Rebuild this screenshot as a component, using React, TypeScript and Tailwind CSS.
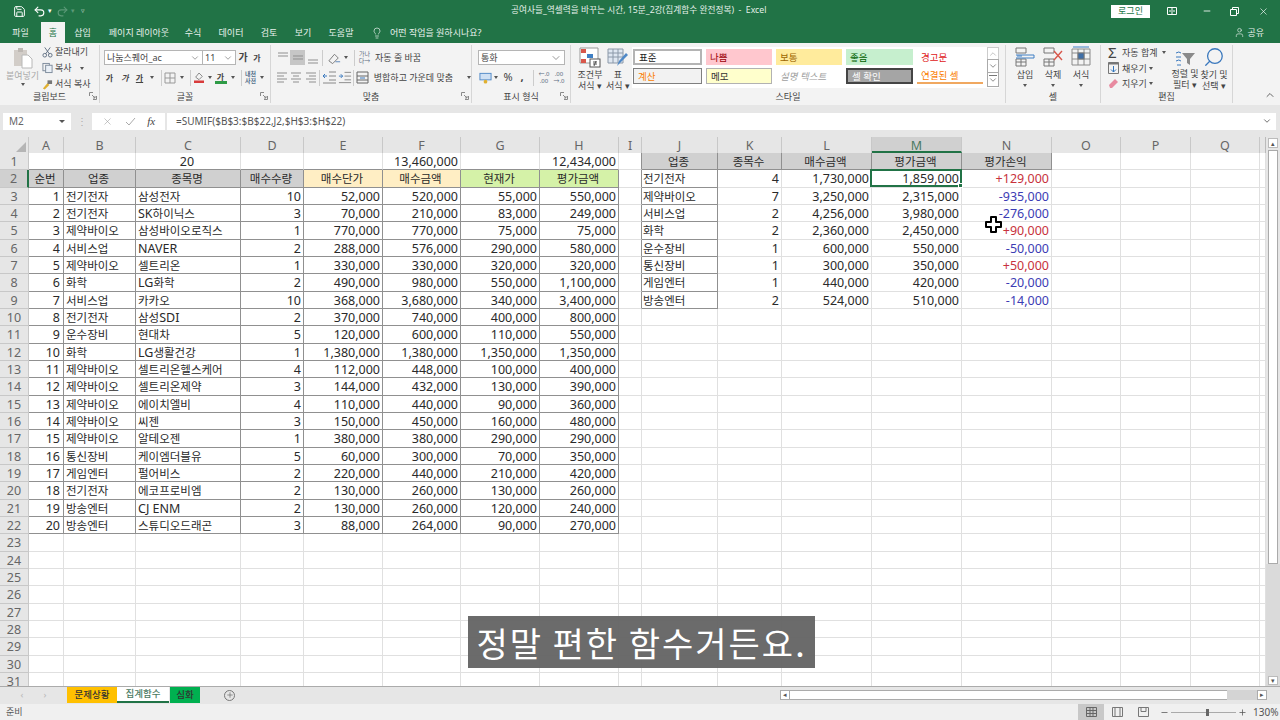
import React from "react";
import { ChevronDown, ChevronUp, Lightbulb, Minus, Plus, Redo2, Save, Search, Undo2, User, X } from "lucide-react";

const cols = [
  ["A", "w-[35px]"], ["B", "w-[72px]"], ["C", "w-[105px]"], ["D", "w-[63px]"], ["E", "w-[79px]"], ["F", "w-[78px]"],
  ["G", "w-[79px]"], ["H", "w-[79px]"], ["I", "w-[23px]"], ["J", "w-[76px]"], ["K", "w-[64px]"], ["L", "w-[90px]"],
  ["M", "w-[90px]"], ["N", "w-[90px]"], ["O", "w-[69px]"], ["P", "w-[70px]"], ["Q", "w-[69px]"], ["R", "w-[6px]"],
] as const;

const stocks: [string, string, string, string, string, string, string, string][] = [
  ["1", "전기전자", "삼성전자", "10", "52,000", "520,000", "55,000", "550,000"],
  ["2", "전기전자", "SK하이닉스", "3", "70,000", "210,000", "83,000", "249,000"],
  ["3", "제약바이오", "삼성바이오로직스", "1", "770,000", "770,000", "75,000", "75,000"],
  ["4", "서비스업", "NAVER", "2", "288,000", "576,000", "290,000", "580,000"],
  ["5", "제약바이오", "셀트리온", "1", "330,000", "330,000", "320,000", "320,000"],
  ["6", "화학", "LG화학", "2", "490,000", "980,000", "550,000", "1,100,000"],
  ["7", "서비스업", "카카오", "10", "368,000", "3,680,000", "340,000", "3,400,000"],
  ["8", "전기전자", "삼성SDI", "2", "370,000", "740,000", "400,000", "800,000"],
  ["9", "운수장비", "현대차", "5", "120,000", "600,000", "110,000", "550,000"],
  ["10", "화학", "LG생활건강", "1", "1,380,000", "1,380,000", "1,350,000", "1,350,000"],
  ["11", "제약바이오", "셀트리온헬스케어", "4", "112,000", "448,000", "100,000", "400,000"],
  ["12", "제약바이오", "셀트리온제약", "3", "144,000", "432,000", "130,000", "390,000"],
  ["13", "제약바이오", "에이치엘비", "4", "110,000", "440,000", "90,000", "360,000"],
  ["14", "제약바이오", "씨젠", "3", "150,000", "450,000", "160,000", "480,000"],
  ["15", "제약바이오", "알테오젠", "1", "380,000", "380,000", "290,000", "290,000"],
  ["16", "통신장비", "케이엠더블유", "5", "60,000", "300,000", "70,000", "350,000"],
  ["17", "게임엔터", "펄어비스", "2", "220,000", "440,000", "210,000", "420,000"],
  ["18", "전기전자", "에코프로비엠", "2", "130,000", "260,000", "130,000", "260,000"],
  ["19", "방송엔터", "CJ ENM", "2", "130,000", "260,000", "120,000", "240,000"],
  ["20", "방송엔터", "스튜디오드래곤", "3", "88,000", "264,000", "90,000", "270,000"],
];

const sectors: [string, string, string, string, string][] = [
  ["전기전자", "4", "1,730,000", "1,859,000", "+129,000"],
  ["제약바이오", "7", "3,250,000", "2,315,000", "-935,000"],
  ["서비스업", "2", "4,256,000", "3,980,000", "-276,000"],
  ["화학", "2", "2,360,000", "2,450,000", "+90,000"],
  ["운수장비", "1", "600,000", "550,000", "-50,000"],
  ["통신장비", "1", "300,000", "350,000", "+50,000"],
  ["게임엔터", "1", "440,000", "420,000", "-20,000"],
  ["방송엔터", "2", "524,000", "510,000", "-14,000"],
];

const tabs = [
  ["파일", "w-[41px]"], ["홈", "w-[24px] bg-[#f3f3f3] text-[#217346]"], ["삽입", "w-[35px]"], ["페이지 레이아웃", "w-[78px]"],
  ["수식", "w-[30px]"], ["데이터", "w-[46px]"], ["검토", "w-[30px]"], ["보기", "w-[38px]"], ["도움말", "w-[38px]"],
];

type CellInfo = { text?: string; cls?: string };

const dark = "border-r-[#909090] border-b-[#909090]";

function getCell(col: string, row: number): CellInfo {
  const si = "ABCDEFGH".indexOf(col);
  const ji = "JKLMN".indexOf(col);
  if (col === "I" && row <= 9) return { cls: "border-r-[#909090]" };
  if (row === 1) {
    if (col === "C") return { text: "20", cls: "justify-center border-b-[#909090]" };
    if (col === "F") return { text: "13,460,000", cls: "justify-end border-b-[#909090]" };
    if (col === "H") return { text: "12,434,000", cls: "justify-end border-b-[#909090]" };
    if (si >= 0) return { cls: "border-b-[#909090]" };
    if (ji >= 0) {
      const labels = ["업종", "종목수", "매수금액", "평가금액", "평가손익"];
      return { text: labels[ji], cls: "justify-center bg-[#d0d0d0] " + dark };
    }
  }
  if (row === 2 && si >= 0) {
    const labels = ["순번", "업종", "종목명", "매수수량", "매수단가", "매수금액", "현재가", "평가금액"];
    const bg = ["bg-[#d0d0d0]", "bg-[#d0d0d0]", "bg-[#d0d0d0]", "bg-[#d0d0d0]", "bg-[#ffeec4]", "bg-[#ffeec4]", "bg-[#d5f2a8]", "bg-[#d5f2a8]"];
    return { text: labels[si], cls: "justify-center " + bg[si] + " " + dark };
  }
  if (row >= 3 && row <= 22 && si >= 0) {
    const left = col === "B" || col === "C";
    const pad = col === "A" ? " !pr-[3px]" : "";
    return { text: stocks[row - 3][si], cls: (left ? "justify-start pl-[2px] " : "justify-end ") + dark + pad };
  }
  if (row >= 2 && row <= 9 && ji >= 0) {
    const v = sectors[row - 2][ji];
    if (col === "J") return { text: v, cls: "justify-start pl-px " + dark };
    if (col === "N") return { text: v, cls: "justify-end " + (v[0] === "+" ? "text-[#c8323c]" : "text-[#3c3cb4]") };
    return { text: v, cls: "justify-end" };
  }
  return {};
}

// korean runs are set a bit smaller than the latin ones, like in the sheet
function CellText({ text }: { text?: string }) {
  if (!text) return null;
  return (
    <span>
      {text.split(/([가-힣]+)/).map((part, i) =>
        i % 2 === 1 ? <span key={i} className="text-[11.5px]">{part}</span> : part
      )}
    </span>
  );
}

function Caret() {
  return <span className="inline-block h-0 w-0 border-x-[2.5px] border-t-[3px] border-x-transparent border-t-[#555]" />;
}

function Launcher() {
  return (
    <svg width="8" height="8" viewBox="0 0 8 8" className="absolute bottom-[3px] right-[2px]" fill="none" stroke="#8a8a8a">
      <path d="M.5 4V.5H4M7.5 4v3.5H4M3 3l3 3M6 4v2H4" />
    </svg>
  );
}

function Group({ cls, label, launcher, children }: { cls: string; label: string; launcher?: boolean; children: React.ReactNode }) {
  return (
    <div className={"relative flex h-full shrink-0 flex-col border-r border-[#d6d6d6] " + cls}>
      <div className="h-[47px] min-h-0">{children}</div>
      <div className="text-center text-[9px] leading-[12px] text-[#444]">{label}</div>
      {launcher && <Launcher />}
    </div>
  );
}

function Slot({ cls, children }: { cls: string; children?: React.ReactNode }) {
  return <span className={"flex shrink-0 items-center justify-center " + cls}>{children}</span>;
}

function Sep() {
  return <span className="h-4 w-px bg-[#ccc]" />;
}

function Lines({ kind, active }: { kind: "top" | "mid" | "bot" | "l" | "c" | "r"; active?: boolean }) {
  const paths = {
    top: "M2 2h10M2 5h10",
    mid: "M2 5h10M2 8h10",
    bot: "M2 9h10M2 12h10",
    l: "M2 2h10M2 5h7M2 8h10M2 11h7",
    c: "M2 2h10M4 5h6M2 8h10M4 11h6",
    r: "M2 2h10M5 5h7M2 8h10M5 11h7",
  };
  return (
    <span className={"flex h-[15px] w-[15px] items-center justify-center " + (active ? "bg-[#c6c6c6]" : "")}>
      <svg width="14" height="14" viewBox="0 0 14 14" fill="none" stroke="#8f8f8f">
        <path d={paths[kind]} />
      </svg>
    </span>
  );
}

function Clipboard() {
  return (
    <Group cls="w-[100px]" label="클립보드" launcher>
      <div className="flex h-full">
        <div className="ml-[3px] flex w-[39px] flex-col items-center pt-[2px] text-[9px] leading-[11px] text-[#aaa]">
          <svg width="22" height="22" viewBox="0 0 22 22">
            <rect x="2" y="3" width="13" height="16" fill="#d2cdc8" />
            <rect x="6" y="1" width="5" height="4" fill="#bdb8b3" />
            <path d="M10 8h6l4 4v9H10z" fill="#fff" stroke="#b8b8b8" />
          </svg>
          <span className="mt-[1px] whitespace-nowrap">붙여넣기</span>
          <span className="mt-[2px] flex"><Caret /></span>
        </div>
        <div className="flex flex-col gap-[1px] text-[9px] leading-[14px] text-[#444]">
          <div className="flex h-[15px] items-center gap-[2px]">
            <svg width="11" height="12" viewBox="0 0 12 12" fill="none" stroke="#5b6b7f"><circle cx="3" cy="9.5" r="2" /><circle cx="9" cy="9.5" r="2" /><path d="M4 8 9 1M8 8 3 1" /></svg>
            <span>잘라내기</span>
          </div>
          <div className="flex h-[15px] items-center gap-[2px]">
            <svg width="11" height="12" viewBox="0 0 12 12" fill="none" stroke="#7a8899"><rect x="1" y="1" width="7" height="8" /><rect x="4" y="3" width="7" height="8" fill="#eaf0f7" /></svg>
            <span>복사</span><span className="ml-[6px] flex"><Caret /></span>
          </div>
          <div className="flex h-[15px] items-center gap-[2px]">
            <svg width="11" height="12" viewBox="0 0 12 12"><path d="M1 11 6 5l2 2-5 5z" fill="#e0b030" /><rect x="6" y="2" width="5" height="4" fill="#777" /></svg>
            <span>서식 복사</span>
          </div>
        </div>
      </div>
    </Group>
  );
}

function FontGroup() {
  return (
    <Group cls="w-[171px]" label="글꼴" launcher>
      <div className="flex flex-col gap-[5px] pl-[4px] pt-[5px] text-[#444]">
        <div className="flex h-[15px] items-center">
          <div className="flex h-[15px] w-[99px] items-center justify-between border border-[#b5b5b5] bg-white px-0.5 text-[9px]">
            <span>나눔스퀘어_ac</span><ChevronDown size={10} strokeWidth={1.2} />
          </div>
          <div className="flex h-[15px] w-[33px] items-center justify-between border border-l-0 border-[#b5b5b5] bg-white px-0.5 text-[9px]">
            <span>11</span><ChevronDown size={10} strokeWidth={1.2} />
          </div>
          <Slot cls="w-[14px] text-[10px] font-bold">가</Slot>
          <Slot cls="w-[14px] text-[8px] font-bold">가</Slot>
        </div>
        <div className="flex h-[15px] items-center text-[8px] font-bold">
          <Slot cls="w-[11px]">가</Slot>
          <Slot cls="w-[20px] italic">가</Slot>
          <Slot cls="w-[9px] underline">가</Slot>
          <Slot cls="w-[16px]"><Caret /></Slot>
          <Slot cls="w-[2px]"><Sep /></Slot>
          <Slot cls="w-[16px]">
            <svg width="12" height="12" viewBox="0 0 12 12" fill="none" stroke="#999"><path d="M1 1h10v10H1zM6 1v10M1 6h10" /></svg>
          </Slot>
          <Slot cls="w-[8px]"><Caret /></Slot>
          <Slot cls="w-[8px]"><Sep /></Slot>
          <Slot cls="w-[10px]">
            <svg width="12" height="14" viewBox="0 0 12 14"><path d="M6 1 2 6l4 3 4-4z" fill="none" stroke="#777" /><rect x="0" y="10" width="12" height="3" fill="#d83b3b" /></svg>
          </Slot>
          <Slot cls="w-[12px]"><Caret /></Slot>
          <Slot cls="w-[9px] flex-col leading-[9px]">
            <span>가</span>
            <span className="h-[3px] w-[12px] shrink-0 bg-[#2e9b46]" />
          </Slot>
          <Slot cls="w-[15px]"><Caret /></Slot>
          <Slot cls="w-[3px]"><Sep /></Slot>
          <Slot cls="w-[15px] text-center text-[6px] leading-[7px] text-[#56708c]">내천<br />사전</Slot>
          <Slot cls="w-[7px]"><Caret /></Slot>
        </div>
      </div>
    </Group>
  );
}

function AlignGroup() {
  return (
    <Group cls="w-[201px]" label="맞춤" launcher>
      <div className="flex flex-col gap-[5px] pl-[4px] pt-[5px] text-[9px] text-[#444]">
        <div className="flex h-[15px] items-center">
          <Lines kind="top" /><Lines kind="mid" active /><Lines kind="bot" />
          <Slot cls="w-[4px]"><Sep /></Slot>
          <Slot cls="w-[26px] gap-[2px]">
            <svg width="15" height="14" viewBox="0 0 16 14" fill="none" stroke="#777"><path d="m2 10 6-7 4 4-6 6z" /><path d="M9 11h5" stroke="#5b85b8" /></svg>
            <Caret />
          </Slot>
          <Slot cls="w-[8px]"><Sep /></Slot>
          <Slot cls="w-[13px] text-center text-[6px] leading-[7px] text-[#5b6b7f]">가나<br />다→</Slot>
          <span className="ml-[4px] whitespace-nowrap">자동 줄 바꿈</span>
        </div>
        <div className="flex h-[15px] items-center">
          <Lines kind="l" /><Lines kind="c" /><Lines kind="r" />
          <Slot cls="w-[4px]"><Sep /></Slot>
          <Slot cls="w-[16px]">
            <svg width="15" height="13" viewBox="0 0 15 13" fill="none" stroke="#888"><path d="M7 1h7M7 5h7M7 9h7M1 12h13" /><path d="M5 5H1m2-2L1 5l2 2" stroke="#3a78bd" /></svg>
          </Slot>
          <Slot cls="w-[14px]">
            <svg width="15" height="13" viewBox="0 0 15 13" fill="none" stroke="#888"><path d="M7 1h7M7 5h7M7 9h7M1 12h13" /><path d="M1 5h4M3 3l2 2-2 2" stroke="#3a78bd" /></svg>
          </Slot>
          <Slot cls="w-[4px]"><Sep /></Slot>
          <Slot cls="w-[13px]">
            <svg width="13" height="13" viewBox="0 0 13 13" fill="none" stroke="#666"><path d="M1 1h11v11H1zM1 5h11M1 9h11" /><path d="M4 7h5" stroke="#3a78bd" /></svg>
          </Slot>
          <span className="ml-[5px] whitespace-nowrap">병합하고 가운데 맞춤</span>
          <span className="ml-[14px] flex"><Caret /></span>
        </div>
      </div>
    </Group>
  );
}

function NumberGroup() {
  return (
    <Group cls="w-[99px]" label="표시 형식" launcher>
      <div className="flex flex-col gap-[5px] pl-[6px] pt-[5px] text-[#444]">
        <div className="flex h-[15px] w-[87px] items-center justify-between border border-[#b5b5b5] bg-white px-0.5 text-[9px]">
          <span>통화</span><ChevronDown size={12} strokeWidth={1.1} />
        </div>
        <div className="flex h-[15px] items-center text-[11px]">
          <Slot cls="w-[14px]">
            <svg width="13" height="12" viewBox="0 0 14 12"><rect x="1" y="1" width="12" height="7" fill="#cfe0f3" stroke="#4f88c6" /><circle cx="7" cy="10" r="2" fill="#e0b030" /></svg>
          </Slot>
          <Slot cls="w-[8px]"><Caret /></Slot>
          <Slot cls="w-[16px]">%</Slot>
          <Slot cls="w-[12px] font-bold">,</Slot>
          <Slot cls="w-[10px]"><Sep /></Slot>
          <Slot cls="w-[12px] text-center text-[6px] leading-[7px] text-[#5b6b7f]">←.0<br />.00</Slot>
          <Slot cls="ml-[2px] w-[14px] text-center text-[6px] leading-[7px] text-[#5b6b7f]">.00<br />→.0</Slot>
        </div>
      </div>
    </Group>
  );
}

function StyleBox({ text, cls }: { text: string; cls: string }) {
  return <div className={"flex h-[16px] shrink-0 items-center whitespace-nowrap pl-[4px] text-[9.5px] " + cls}>{text}</div>;
}

function StylesGroup() {
  return (
    <Group cls="w-[435px]" label="스타일">
      <div className="flex h-full text-[9px] leading-[11px] text-[#444]">
        <div className="flex w-[38px] shrink-0 flex-col items-center pt-[2px]">
          <svg width="22" height="21" viewBox="0 0 22 21" className="shrink-0">
            <path d="M1 1h18v15H1z" fill="#fff" stroke="#999" />
            <rect x="2" y="2" width="5" height="4" fill="#d8574b" />
            <rect x="8" y="7" width="6" height="4" fill="#3f7fc4" />
            <rect x="2" y="12" width="5" height="4" fill="#d8574b" />
            <rect x="11" y="12" width="10" height="8" fill="#fff" stroke="#555" />
            <path d="M14 15h4M14 17h4M17 14l-2 5" stroke="#555" fill="none" />
          </svg>
          <span className="mt-[1px] whitespace-nowrap text-center">조건부<br />서식 ▾</span>
        </div>
        <div className="flex w-[18px] shrink-0 flex-col items-center pt-[2px]">
          <svg width="22" height="21" viewBox="0 0 22 21" className="shrink-0">
            <path d="M1 2h15v14H1zM1 6h15M1 10h15M6 2v14M11 2v14" fill="#dfe7f1" stroke="#8b98a8" />
            <path d="m10 19 2-5 7-8 2 2-8 8z" fill="#4f88c6" />
          </svg>
          <span className="mt-[1px] whitespace-nowrap text-center">표<br />서식 ▾</span>
        </div>
        <div className="ml-[5px] mt-[2px] flex h-[41px] w-[355px] shrink-0 flex-col gap-[3px] bg-white pl-[1px] pt-[2px]">
          <div className="flex gap-[4px]">
            <StyleBox text="표준" cls="w-[69px] border-2 border-[#b4b4b4] text-[#222]" />
            <StyleBox text="나쁨" cls="w-[66px] bg-[#ffc7ce] text-[#9c0006]" />
            <StyleBox text="보통" cls="w-[66px] bg-[#ffeb9c] text-[#9c6500]" />
            <StyleBox text="좋음" cls="w-[67px] bg-[#c6efce] text-[#006100]" />
            <StyleBox text="경고문" cls="w-[64px] pl-[3px] text-[#e02020]" />
          </div>
          <div className="flex gap-[4px]">
            <StyleBox text="계산" cls="w-[69px] border border-[#7f7f7f] bg-[#f2f2f2] text-[#fa7d00]" />
            <StyleBox text="메모" cls="w-[66px] border border-[#b2b2b2] bg-[#ffffcc] text-[#333]" />
            <StyleBox text="설명 텍스트" cls="w-[66px] italic text-[#a0a0a0]" />
            <StyleBox text="셀 확인" cls="w-[67px] border-2 border-[#444] bg-[#a5a5a5] text-white" />
            <StyleBox text="연결된 셀" cls="w-[66px] border-b-2 border-[#f0a860] pl-[2px] text-[#fa7d00]" />
          </div>
        </div>
        <div className="mt-[2px] flex h-[41px] w-[12px] shrink-0 flex-col bg-white text-[#777]">
          <span className="flex h-[13px] items-center justify-center border border-[#ccc] text-[#bbb]"><ChevronUp size={10} /></span>
          <span className="-mt-px flex h-[14px] items-center justify-center border border-[#aaa]"><ChevronDown size={10} /></span>
          <span className="-mt-px flex h-[15px] flex-col items-center justify-center border border-[#aaa]"><span className="h-px w-[8px] bg-[#777]" /><ChevronDown size={10} className="-my-[1px]" /></span>
        </div>
      </div>
    </Group>
  );
}

function CellButton({ label, type }: { label: string; type: "ins" | "del" | "fmt" }) {
  return (
    <div className="flex w-[28px] flex-col items-center pt-[1px] text-[9px] leading-[12px] text-[#444]">
      <svg width="22" height="22" viewBox="0 0 22 22" fill="none" stroke="#777" className="shrink-0">
        {type === "fmt" ? (
          <>
            <path d="M2 3h18v16H2zM2 7h18M2 13h18M8 3v16M14 3v16" stroke="#8a8a8a" />
            <rect x="8" y="7" width="6" height="6" fill="#3f6fa8" />
            <path d="M3 1h16" stroke="#3f7fc4" />
          </>
        ) : (
          <>
            <path d="M2 2h10v5H2zM2 13h10v7H2zM7 13v7M2 16h10" />
            {type === "ins" ? <path d="M2 9h18v3H2M8 10H3" stroke="#3f7fc4" /> : <path d="m12 5 8 9M20 5l-8 9" stroke="#d8574b" strokeWidth="1.4" />}
          </>
        )}
      </svg>
      <span className="mt-[1px]">{label}</span>
      <span className="mt-[3px] flex"><Caret /></span>
    </div>
  );
}

function CellsGroup() {
  return (
    <Group cls="w-[95px]" label="셀">
      <div className="flex justify-center">
        <CellButton label="삽입" type="ins" />
        <CellButton label="삭제" type="del" />
        <CellButton label="서식" type="fmt" />
      </div>
    </Group>
  );
}

function EditGroup() {
  return (
    <Group cls="w-[132px]" label="편집">
      <div className="flex h-full text-[9px] leading-[11px] text-[#444]">
        <div className="flex w-[69px] shrink-0 flex-col gap-[1px] pl-[7px]">
          <div className="flex h-[15px] items-center gap-[2px] whitespace-nowrap">
            <span className="w-[11px] text-[15px] leading-[15px] text-[#444]">Σ</span><span className="ml-[1px]">자동 합계</span><span className="ml-[3px] flex"><Caret /></span>
          </div>
          <div className="flex h-[15px] items-center gap-[2px] whitespace-nowrap">
            <svg width="11" height="12" viewBox="0 0 11 12" fill="none"><path d="M.5 .5h10v11H.5z" stroke="#777" /><path d="M.5 .5h10v2H.5z" fill="#777" /><path d="M5.5 4v6M3 7.5l2.5 2.5L8 7.5" stroke="#2f74bd" /></svg>
            <span className="ml-[1px]">채우기</span><Caret />
          </div>
          <div className="flex h-[15px] items-center gap-[2px] whitespace-nowrap">
            <svg width="11" height="11" viewBox="0 0 11 11"><path d="m1 7 6-6 3 3-6 6H2z" fill="#e88aa0" /></svg>
            <span className="ml-[1px]">지우기</span><Caret />
          </div>
        </div>
        <div className="flex w-[30px] shrink-0 flex-col items-center pt-[4px]">
          <svg width="24" height="18" viewBox="0 0 22 18" className="shrink-0">
            <path d="M8 4h13l-5 6v6l-3-2v-4z" fill="#8a8a8a" />
            <path d="M2 4q3-2 5 0M2 8h5M2 12q3-2 5 0M3 16h4" stroke="#3a78bd" fill="none" />
          </svg>
          <span className="mt-[1px] whitespace-nowrap text-center">정렬 및<br />필터 ▾</span>
        </div>
        <div className="ml-[1px] flex w-[26px] shrink-0 flex-col items-center pt-[1px]">
          <Search size={22} strokeWidth={1.4} className="shrink-0 -scale-x-100 text-[#3a78bd]" />
          <span className="mt-[1px] whitespace-nowrap text-center">찾기 및<br />선택 ▾</span>
        </div>
      </div>
    </Group>
  );
}

function Ribbon() {
  return (
    <div className="flex h-[62px] shrink-0 items-stretch bg-[#f3f3f3] py-[2px]">
      <Clipboard />
      <FontGroup />
      <AlignGroup />
      <NumberGroup />
      <StylesGroup />
      <CellsGroup />
      <EditGroup />
      <div className="flex flex-1 items-end justify-end pb-0.5 pr-1 text-[#666]"><ChevronUp size={12} /></div>
    </div>
  );
}

function FormulaBar() {
  return (
    <div className="flex h-[32px] shrink-0 items-center bg-[#e6e6e6] pl-[3px] pr-[4px] text-[10px] text-[#666]">
      <div className="flex h-[17px] w-[68px] items-center justify-between bg-white px-1.5">
        <span>M2</span>
        <span className="h-0 w-0 border-x-[3px] border-t-[3px] border-x-transparent border-t-[#555]" />
      </div>
      <span className="mx-auto text-[#aaa]">⋮</span>
      <div className="flex h-[17px] w-[73px] items-center justify-around bg-white px-1 text-[#999]">
        <X size={11} strokeWidth={1.2} />
        <svg width="11" height="11" viewBox="0 0 11 11" fill="none" stroke="#aaa"><path d="m1 6 3 3 6-7" /></svg>
        <span className="font-['Liberation_Serif',serif] text-[11px] italic text-[#444]">fx</span>
      </div>
      <div className="ml-[2px] flex h-[17px] w-[1109px] shrink-0 items-center justify-between bg-white pl-[9px] pr-[4px] text-[10px] text-[#555]">
        <span>=SUMIF($B$3:$B$22,J2,$H$3:$H$22)</span>
        <ChevronDown size={10} />
      </div>
    </div>
  );
}

function Sheet() {
  const rows = Array.from({ length: 31 }, (_, i) => i + 1);
  return (
    <div className="relative flex min-h-0 flex-1 overflow-hidden bg-white">
      <div className="w-[1266px] shrink-0 border-r border-[#bbb]">
        <div className="flex h-[16px] bg-[#e6e6e6] text-[12.5px] leading-[17px] text-[#666]">
          <div className="relative w-[29px] shrink-0 border-r border-[#c8c8c8]">
            <span className="absolute bottom-[1px] right-[2px] h-0 w-0 border-b-[10px] border-l-[10px] border-b-[#b5b5b5] border-l-transparent" />
          </div>
          {cols.map(([c, w]) => (
            <div key={c} className={"shrink-0 text-center " + w + (c === "R" ? "" : " border-r border-[#c8c8c8]") + (c === "M" ? " border-b-2 border-b-[#217346] bg-[#d0d0d0] text-[#4a7a62]" : "")}>
              {c === "R" ? "" : c}
            </div>
          ))}
        </div>
        {rows.map((r) => (
          <div key={r} className="flex h-[17.33px] text-[12.5px] leading-[12px] text-[#2a2a2a]">
            <div className={"flex w-[29px] shrink-0 items-center justify-center border-b border-r border-[#c8c8c8] pt-[2px] text-[#666] " + (r === 2 ? "border-r-2 border-r-[#217346] bg-[#d0d0d0] text-[#4a7a62]" : "bg-[#e6e6e6]")}>
              {r}
            </div>
            {cols.map(([c, w]) => {
              const cell = getCell(c, r);
              return (
                <div key={c} className={"flex shrink-0 items-center whitespace-nowrap border-b border-r border-[#e0e0e0] pr-[2px] pt-[2px] " + w + " " + (cell.cls ?? "")}>
                  <CellText text={cell.text} />
                </div>
              );
            })}
          </div>
        ))}
      </div>
      <div className="flex w-[14px] shrink-0 flex-col bg-[#e6e6e6] pl-[2px] pr-[2px]">
        <div className="mt-[1px] flex h-[10px] items-center justify-center border border-[#bbb] bg-white text-[7px] leading-[7px] text-[#555]">▴</div>
        <div className="mt-[2px] h-[414px] border border-[#aaa] bg-white" />
        <div className="-mx-[2px] flex flex-1 flex-col bg-[#dadada]">
          <div className="mx-[2px] mb-[1px] mt-auto flex h-[9px] items-center justify-center border border-[#bbb] bg-white text-[7px] leading-[7px] text-[#555]">▾</div>
        </div>
      </div>
      {/* selected cell M2 */}
      <div className="absolute left-[870px] top-[32px] h-[18px] w-[92px] border-2 border-[#217346]">
        <span className="absolute -bottom-[3px] -right-[3px] h-[5px] w-[5px] border border-white bg-[#217346]" />
      </div>
      {/* mouse cursor */}
      <svg width="17" height="17" viewBox="0 0 17 17" className="absolute left-[985px] top-[79px]">
        <path d="M6 1h5v5h5v5h-5v5H6v-5H1V6h5z" fill="#fff" stroke="#000" strokeWidth="2" strokeLinejoin="round" />
      </svg>
      {/* subtitle */}
      <div className="absolute left-[468px] top-[479px] flex h-[52px] w-[347px] items-center justify-center bg-[#636363]/95 font-['Noto_Sans_CJK_KR',sans-serif] text-[34px] tracking-[2px] text-white">
        정말 편한 함수거든요.
      </div>
    </div>
  );
}

function SheetTabs() {
  return (
    <div className="flex h-[18px] shrink-0 items-stretch border-t border-[#ababab] bg-[#e6e6e6] pb-px text-[9.5px] font-medium">
      <div className="flex w-[67px] items-center justify-center gap-5 text-[9px] text-[#bbb]"><span>‹</span><span>›</span></div>
      <div className="flex w-[50px] items-center justify-center bg-[#ffc000] text-[#333]">문제상황</div>
      <div className="flex w-[52px] items-center justify-center border-b-2 border-[#217346] bg-white text-[#4a7a62]">집계함수</div>
      <div className="ml-px flex w-[30px] items-center justify-center bg-[#00b050] text-[#333]">심화</div>
      <div className="ml-[24px] flex items-center">
        <span className="flex h-[11px] w-[11px] items-center justify-center rounded-full border border-[#777] text-[#666]"><Plus size={8} /></span>
      </div>
      <div className="ml-auto flex w-[500px] items-stretch py-[3px] pr-[13px]">
        <div className="flex w-[10px] items-center justify-center border border-[#ababab] bg-white text-[7px] text-[#555]">◂</div>
        <div className="flex-1 border-y border-[#ababab] bg-white" />
        <div className="w-[30px] bg-[#d4d4d4]" />
        <div className="flex w-[10px] items-center justify-center border border-[#ababab] bg-white text-[7px] text-[#555]">▸</div>
      </div>
    </div>
  );
}

function StatusBar() {
  return (
    <div className="flex h-[16px] shrink-0 items-center bg-[#f0f0f0] pl-[6px] pr-[6px] text-[10px] text-[#555]">
      <span className="text-[9px]">준비</span>
      <div className="ml-auto flex h-full items-center">
        <span className="flex h-full w-[26px] items-center justify-center bg-[#c8c8c8]">
          <svg width="11" height="10" viewBox="0 0 11 10" fill="none" stroke="#666"><path d="M.5.5h10v9H.5zM.5 3.5h10M.5 6.5h10M4 .5v9M7 .5v9" /></svg>
        </span>
        <span className="flex w-[26px] justify-center">
          <svg width="11" height="10" viewBox="0 0 11 10" fill="none" stroke="#777"><path d="M.5.5h10v9H.5zM3 .5v9M8 .5v9" /></svg>
        </span>
        <span className="flex w-[26px] justify-center">
          <svg width="11" height="10" viewBox="0 0 11 10" fill="none" stroke="#777"><path d="M.5.5h10v9H.5zM3 .5v4h5v-4" /></svg>
        </span>
        <Minus size={9} className="ml-[4px]" />
        <div className="relative mx-[2px] h-px w-[65px] bg-[#aaa]">
          <span className="absolute left-[35px] -top-[3px] h-[7px] w-[3px] bg-[#666]" />
        </div>
        <Plus size={9} />
        <span className="ml-[6px] w-[21px] whitespace-nowrap text-right">130%</span>
      </div>
    </div>
  );
}

export default function App() {
  return (
    <div className="flex h-[720px] w-[1280px] flex-col overflow-hidden bg-white font-['Noto_Sans','Noto_Sans_CJK_KR',sans-serif]">
      <div className="flex h-[22px] shrink-0 items-center bg-[#217346] text-white">
        <div className="flex w-[511px] shrink-0 items-center pl-[13px]">
          <Save size={13} strokeWidth={1.8} />
          <Undo2 size={13} className="ml-[7px]" strokeWidth={2} />
          <span className="ml-[2px] text-[7px]">▾</span>
          <Redo2 size={13} className="ml-[4px] text-[#5c9a78]" />
          <span className="ml-[2px] text-[7px] text-[#5c9a78]">▾</span>
          <span className="ml-[6px] text-[7px] text-[#c8dcd0]">▿</span>
        </div>
        <span className="whitespace-pre text-[8.7px] text-[#e4efe8]">공여사들_역셀력을 바꾸는 시간, 15분_2강(집계함수 완전정복)  -  Excel</span>
        <div className="ml-auto flex items-center">
          <span className="flex h-[13px] w-[39px] items-center justify-center bg-white text-[9px] text-[#217346]">로그인</span>
          <svg width="10" height="8" viewBox="0 0 10 8" fill="none" stroke="#fff" className="ml-[17px]"><path d="M.5.5h9v7h-9zM5 .5v7M2 4h2M6 4h2" /></svg>
          <Minus size={10} className="ml-[25px]" />
          <svg width="9" height="9" viewBox="0 0 9 9" fill="none" stroke="#fff" className="ml-[18px]"><path d="M.5 2.5h6v6h-6zM2.5 2.5v-2h6v6h-2" /></svg>
          <X size={11} className="ml-[19px] mr-[11px]" strokeWidth={1.4} />
        </div>
      </div>
      <div className="flex h-[21px] shrink-0 items-stretch bg-[#217346] text-[9px] text-[#e8f1ec]">
        {tabs.map(([t, w]) => (
          <div key={t} className={"flex items-center justify-center whitespace-nowrap " + w}>
            {t}
          </div>
        ))}
        <div className="ml-[11px] flex items-center gap-[7px]">
          <Lightbulb size={12} strokeWidth={1.4} />
          <span>어떤 작업을 원하시나요?</span>
        </div>
        <div className="ml-auto flex items-center gap-[2px] pr-[16px]">
          <User size={11} strokeWidth={1.4} />
          <span>공유</span>
        </div>
      </div>
      <Ribbon />
      <FormulaBar />
      <Sheet />
      <SheetTabs />
      <StatusBar />
    </div>
  );
}
